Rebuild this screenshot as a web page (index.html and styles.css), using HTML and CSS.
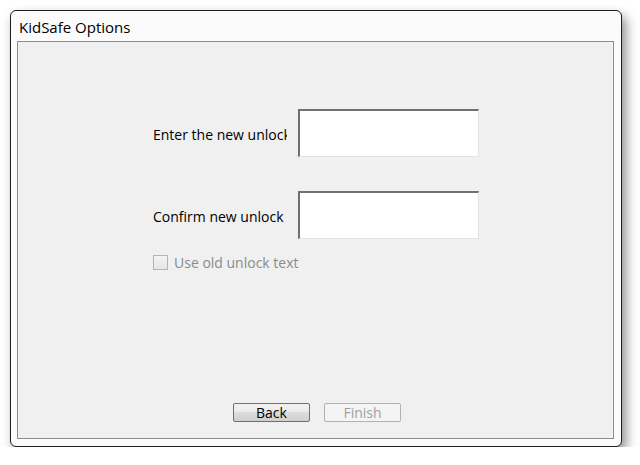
FILE: index.html
```html
<!DOCTYPE html>
<html>
<head>
<meta charset="utf-8">
<link rel="stylesheet" href="styles.css">
</head>
<body>
<div class="window">
  <div class="titlebar">KidSafe Options</div>
  <div class="panel">
    <div class="form">
      <div class="row row-first">
        <div class="label">Enter the new unlock</div>
        <div class="textbox"></div>
      </div>
      <div class="row row-second">
        <div class="label">Confirm new unlock</div>
        <div class="textbox"></div>
      </div>
      <div class="check">
        <span class="box"></span>
        <span class="check-label">Use old unlock text</span>
      </div>
    </div>
    <div class="buttons">
      <div class="btn">Back</div>
      <div class="btn btn-disabled">Finish</div>
    </div>
  </div>
</div>
</body>
</html>
```

FILE: styles.css
```css
html, body {
  margin: 0;
  padding: 0;
  background: #ffffff;
  font-family: "Open Sans", "Noto Sans", sans-serif;
}
.window {
  margin: 10px 0 0 10px;
  width: 610px;
  height: 435px;
  border: 1px solid #1e1e1e;
  border-radius: 6px;
  background: #fbfbfb;
  box-shadow: 4px 6px 12px rgba(0,0,0,0.45);
  display: flex;
  flex-direction: column;
  box-sizing: content-box;
}
.titlebar {
  height: 30px;
  padding-left: 8px;
  font-size: 15px;
  line-height: 32px;
  color: #000;
}
.panel {
  margin: 0 7px 7px 6px;
  flex: 1;
  border: 1px solid #8c8c8c;
  background: #f0f0f0;
  display: flex;
  flex-direction: column;
}
.form {
  flex: 1;
  padding-left: 135px;
}
.row {
  display: flex;
  align-items: center;
  height: 48px;
}
.row-first { margin-top: 67px; }
.row-second { margin-top: 34px; }
.label {
  width: 134px;
  margin-right: 11px;
  padding-top: 3px;
  overflow: hidden;
  white-space: nowrap;
  font-size: 14px;
  color: #000;
}
.textbox {
  width: 178px;
  height: 45px;
  background: #fff;
  border-top: 2px solid #707070;
  border-left: 2px solid #707070;
  border-right: 1px solid #e3e3e3;
  border-bottom: 1px solid #e3e3e3;
}
.check {
  display: flex;
  align-items: center;
  margin-top: 14px;
  height: 18px;
}
.box {
  width: 13px;
  height: 13px;
  border: 1px solid #b4b4b4;
  background: linear-gradient(#f4f4f4, #e6e6e6);
  margin-right: 6px;
}
.check-label {
  font-size: 14px;
  color: #8a8a8a;
}
.buttons {
  display: flex;
  justify-content: center;
  gap: 14px;
  padding-left: 3px;
  margin-bottom: 16px;
}
.btn {
  width: 75px;
  height: 17px;
  border: 1px solid #707070;
  border-radius: 2px;
  background: linear-gradient(#f2f2f2 0%, #ebebeb 45%, #dddddd 50%, #cfcfcf 100%);
  font-size: 14px;
  line-height: 17px;
  text-align: center;
  color: #000;
}
.btn-disabled {
  border-color: #adb2b5;
  background: #f4f4f4;
  color: #a0a0a0;
}
```
